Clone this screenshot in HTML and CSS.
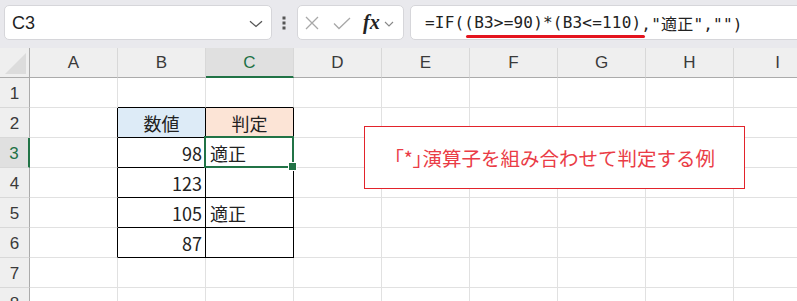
FILE: index.html
```html
<!DOCTYPE html>
<html lang="ja">
<head>
<meta charset="utf-8">
<link rel="stylesheet" href="styles.css">
</head>
<body>
<div class="toolbar">
  <div class="namebox">
    <span class="name">C3</span>
    <svg class="chev" width="14" height="8" viewBox="0 0 14 8"><path d="M1 1.2 L7 6.5 L13 1.2" fill="none" stroke="#555" stroke-width="1.3"/></svg>
  </div>
  <div class="dots">
    <svg width="4" height="14" viewBox="0 0 4 14"><rect x="0.5" y="0.5" width="3" height="3" fill="#555"/><rect x="0.5" y="5.5" width="3" height="3" fill="#555"/><rect x="0.5" y="10.5" width="3" height="3" fill="#555"/></svg>
  </div>
  <div class="fxbox">
    <svg class="ico-x" width="14" height="14" viewBox="0 0 14 14"><path d="M1 1 L13 13 M13 1 L1 13" stroke="#a8a8a8" stroke-width="1.3" fill="none"/></svg>
    <svg class="ico-ok" width="18" height="13" viewBox="0 0 18 13"><path d="M1 6.5 L6 11.5 L17 1" stroke="#a8a8a8" stroke-width="1.3" fill="none"/></svg>
    <span class="fx">fx</span>
    <svg class="chev-s" width="10" height="6" viewBox="0 0 10 6"><path d="M1 1 L5 5 L9 1" fill="none" stroke="#888" stroke-width="1.1"/></svg>
  </div>
  <div class="formula">
    <span>=IF(</span><span class="mark">(B3&gt;=90)*(B3&lt;=110)</span><span>,"適正","")</span>
  </div>
</div>

<div class="sheet">
  <!-- header row -->
  <div class="corner"><span class="tri"></span></div>
  <div class="hd">A</div>
  <div class="hd">B</div>
  <div class="hd sel-col">C</div>
  <div class="hd">D</div>
  <div class="hd">E</div>
  <div class="hd">F</div>
  <div class="hd">G</div>
  <div class="hd">H</div>
  <div class="hd">I</div>

  <!-- row 1 -->
  <div class="rh">1</div>
  <div class="c"></div>
  <div class="c tt"></div>
  <div class="c tt"></div>
  <div class="c"></div><div class="c"></div><div class="c"></div><div class="c"></div><div class="c"></div><div class="c"></div>

  <!-- row 2 -->
  <div class="rh">2</div>
  <div class="c tl"></div>
  <div class="c tb blue ctr">数値</div>
  <div class="c tb peach ctr">判定</div>
  <div class="c"></div><div class="c"></div><div class="c"></div><div class="c"></div><div class="c"></div><div class="c"></div>

  <!-- row 3 -->
  <div class="rh sel-row">3</div>
  <div class="c tl"></div>
  <div class="c tb num">98</div>
  <div class="c tb txt active">適正</div>
  <div class="c"></div><div class="c"></div><div class="c"></div><div class="c"></div><div class="c"></div><div class="c"></div>

  <!-- row 4 -->
  <div class="rh">4</div>
  <div class="c tl"></div>
  <div class="c tb num">123</div>
  <div class="c tb txt"></div>
  <div class="c"></div><div class="c"></div><div class="c"></div><div class="c"></div><div class="c"></div><div class="c"></div>

  <!-- row 5 -->
  <div class="rh">5</div>
  <div class="c tl"></div>
  <div class="c tb num">105</div>
  <div class="c tb txt">適正</div>
  <div class="c"></div><div class="c"></div><div class="c"></div><div class="c"></div><div class="c"></div><div class="c"></div>

  <!-- row 6 -->
  <div class="rh">6</div>
  <div class="c tl"></div>
  <div class="c tb num">87</div>
  <div class="c tb txt"></div>
  <div class="c"></div><div class="c"></div><div class="c"></div><div class="c"></div><div class="c"></div><div class="c"></div>

  <!-- row 7 -->
  <div class="rh">7</div>
  <div class="c"></div><div class="c"></div><div class="c"></div><div class="c"></div><div class="c"></div><div class="c"></div><div class="c"></div><div class="c"></div><div class="c"></div>

  <!-- row 8 -->
  <div class="rh">8</div>
  <div class="c"></div><div class="c"></div><div class="c"></div><div class="c"></div><div class="c"></div><div class="c"></div><div class="c"></div><div class="c"></div><div class="c"></div>

  <div class="note"><span class="brk">「*」</span>演算子を組み合わせて判定する例</div>
</div>
</body>
</html>
```

FILE: styles.css
```css
* { box-sizing: border-box; }
html, body {
  margin: 0;
  padding: 0;
  width: 797px;
  height: 301px;
  overflow: hidden;
  background: #ffffff;
  font-family: "Liberation Sans", "Noto Sans CJK JP", sans-serif;
}

/* ---------- toolbar ---------- */
.toolbar {
  height: 48px;
  background: #e9e9ed;
  display: flex;
  align-items: flex-start;
  padding: 5px 0 0 4px;
  overflow: hidden;
}
.toolbar > * { flex: none; }
.namebox {
  width: 268px;
  height: 35px;
  background: #fff;
  border: 1px solid #d6d6da;
  border-radius: 5px;
  display: flex;
  align-items: center;
  padding: 0 4px 0 7px;
}
.name {
  font-size: 18px;
  color: #1f1f1f;
  flex: 1;
  padding-top: 1px;
}
.chev { margin-right: 4px; margin-top: 2px; }
.dots {
  width: 25px;
  height: 35px;
  display: flex;
  align-items: center;
  justify-content: center;
  padding-right: 1px;
}
.fxbox {
  width: 107px;
  height: 35px;
  background: #fff;
  border: 1px solid #d6d6da;
  border-radius: 5px;
  display: flex;
  align-items: center;
  padding-left: 7px;
}
.ico-x { margin-right: 14px; margin-top: 1px; }
.ico-ok { margin-right: 12px; margin-top: 1px; }
.fx {
  font-family: "Liberation Serif", "DejaVu Serif", serif;
  font-style: italic;
  font-weight: bold;
  font-size: 20px;
  color: #222;
  margin-right: 4px;
  margin-top: -1px;
}
.chev-s { margin-top: 2px; }
.formula {
  width: 400px;
  height: 35px;
  margin-left: 6px;
  background: #fff;
  border: 1px solid #d6d6da;
  border-radius: 5px 0 0 5px;
  display: flex;
  align-items: center;
  padding-left: 14px;
  font-family: "DejaVu Sans Mono", "Noto Sans CJK JP", monospace;
  font-size: 16px;
  letter-spacing: 0.2px;
  color: #222;
  white-space: pre;
}
.mark { position: relative; }
.mark::after {
  content: "";
  position: absolute;
  left: 2px;
  right: -4px;
  bottom: -6px;
  height: 3px;
  border-radius: 2px;
  background: #e4141e;
}

/* ---------- sheet ---------- */
.sheet {
  position: relative;
  height: 253px;
  overflow: hidden;
  display: grid;
  grid-template-columns: 30px repeat(9, 88px);
  grid-auto-rows: 30px;
  font-size: 17px;
  color: #333;
}
.corner {
  background: #efefef;
  border-right: 1px solid #ababab;
  border-bottom: 1px solid #ababab;
  position: relative;
}
.tri {
  position: absolute;
  right: 3px;
  bottom: 3px;
  width: 21px;
  height: 21px;
  background: #dcdcdc;
  clip-path: polygon(100% 0, 100% 100%, 0 100%);
}
.hd {
  background: #efefef;
  border-right: 1px solid #d8d8d8;
  border-bottom: 1px solid #ababab;
  display: flex;
  align-items: center;
  justify-content: center;
  padding-top: 1px;
  color: #3a3a3a;
}
.rh {
  background: #efefef;
  border-right: 1px solid #ababab;
  border-bottom: 1px solid #d8d8d8;
  display: flex;
  align-items: center;
  justify-content: center;
  padding-top: 2px;
  color: #3a3a3a;
}
.sel-col {
  background: #e0e0e0;
  color: #1e7145;
  border-bottom: 2px solid #217346;
}
.sel-row {
  background: #e0e0e0;
  color: #1e7145;
  border-right: 2px solid #217346;
}
.c {
  border-right: 1px solid #e1e1e1;
  border-bottom: 1px solid #e1e1e1;
  display: flex;
  align-items: center;
  font-family: "Noto Sans CJK JP", sans-serif;
  font-size: 18px;
  color: #222;
  padding-top: 1px;
}
.tt { border-bottom-color: #000; }
.tl { border-right-color: #000; }
.tb {
  border-right-color: #000;
  border-bottom-color: #000;
}
.blue { background: #ddebf7; }
.peach { background: #fce4d6; }
.ctr { justify-content: center; }
.num { justify-content: flex-end; padding-right: 3px; }
.txt { padding-left: 4px; }
.active { position: relative; }
.active::before {
  content: "";
  position: absolute;
  left: -2px;
  top: -2px;
  right: -1px;
  bottom: -1px;
  border: 2px solid #217346;
}
.active::after {
  content: "";
  position: absolute;
  right: -4px;
  bottom: -4px;
  width: 7px;
  height: 7px;
  background: #217346;
  border: 1px solid #fff;
}

.note {
  position: absolute;
  left: 364px;
  top: 78px;
  width: 381px;
  height: 63px;
  background: #fff;
  border: 1px solid #e2232b;
  display: flex;
  align-items: center;
  justify-content: center;
  font-family: "Noto Sans CJK JP", sans-serif;
  font-size: 19.5px;
  color: #ea3c46;
  padding-bottom: 1px;
}
.brk { font-feature-settings: "palt"; }
```
